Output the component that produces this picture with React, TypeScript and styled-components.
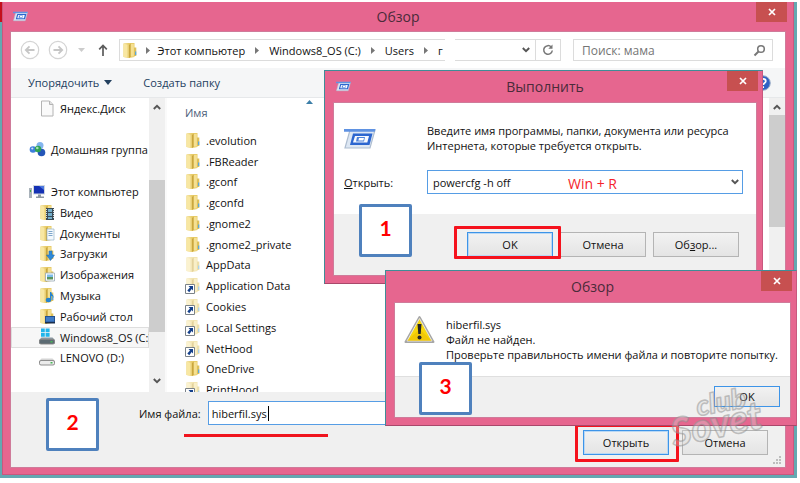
import React from "react";
import styled, { createGlobalStyle, css } from "styled-components";

const PINK = "#e6668f";
const FONT = '"Open Sans", "Noto Sans", sans-serif';

const GlobalStyle = createGlobalStyle`
  *, *::before, *::after { box-sizing: border-box; }
  body { margin: 0; background: #fff; font: 11px/15px ${FONT}; color: #111; }
  button, input, select { font: inherit; color: inherit; margin: 0; }
  ul { list-style: none; margin: 0; padding: 0; }
  p { margin: 0; }
  svg { flex: none; }
`;

/* ---------- window frame ---------- */

const Page = styled.main`
  position: relative;
  padding: 2px 3px 5px 0;
  overflow: hidden;
`;

const Desktop = styled.div`
  padding: 0 3px 3px 2px;
  background:
    linear-gradient(#c4101c, #c4101c) 0 0 / 2px 20px no-repeat,
    #64a8b1;
`;

const frame = css`
  display: flex;
  flex-direction: column;
  background: ${PINK};
  border: 1px solid #c9587e;
`;

const MainWindow = styled.section`
  ${frame}
  border-top: 0;
  padding: 0 7px 6px 7px;
`;

const Dialog = styled.section<{ $x: number; $y: number; $w: number }>`
  ${frame}
  position: absolute;
  left: ${(p) => p.$x}px;
  top: ${(p) => p.$y}px;
  width: ${(p) => p.$w}px;
  padding: 0 5px 7px 8px;
  border-color: #3f8d97;
  border-right-color: #c9587e;
  border-bottom-color: #a9486b;
`;

const TitleBar = styled.header<{ $h: number }>`
  position: relative;
  height: ${(p) => p.$h}px;
  display: flex;
  align-items: center;
  justify-content: center;
`;

const TitleIcon = styled.span`
  position: absolute;
  left: 3px;
  top: 0;
  bottom: 0;
  display: flex;
  align-items: center;
`;

const Title = styled.h1`
  margin: 0;
  font-size: 14px;
  line-height: 20px;
  font-weight: 400;
  color: #4b2b3a;
`;

const CloseButton = styled.button`
  position: absolute;
  right: -1px;
  top: 0;
  width: 31px;
  height: 20px;
  padding: 0;
  border: 0;
  background: #c75050;
  display: flex;
  align-items: center;
  justify-content: center;
`;

const Client = styled.div`
  background: #fff;
  border: 1px solid #cf7b9a;
  display: flex;
  flex-direction: column;
`;

/* ---------- explorer ---------- */

const NavBar = styled.nav`
  height: 36px;
  padding: 0 12px 0 9px;
  display: flex;
  align-items: center;
`;

const IconButton = styled.button<{ $w: number }>`
  width: ${(p) => p.$w}px;
  height: 20px;
  padding: 0;
  border: 0;
  background: none;
  display: flex;
  align-items: center;
  justify-content: center;
`;

const Crumbs = styled.div`
  flex: 0 1 328px;
  height: 22px;
  padding-left: 2px;
  border: 1px solid #dcdcdc;
  border-right: 0;
  display: flex;
  align-items: center;
  overflow: hidden;
  white-space: nowrap;
`;

const Crumb = styled.button`
  padding: 0;
  border: 0;
  background: none;
  white-space: nowrap;
`;

const CrumbArrow = styled.span<{ $first?: boolean }>`
  flex: none;
  width: ${(p) => (p.$first ? 20 : 24)}px;
  display: flex;
  justify-content: center;
`;

const ClippedName = styled.span`
  width: 6px;
`;

const AddressEnd = styled.div`
  flex: 1 1 107px;
  height: 22px;
  margin-left: 10px;
  border: 1px solid #dcdcdc;
  border-left: 0;
  display: flex;
  justify-content: flex-end;
`;

const Refresh = styled(IconButton)`
  border-left: 1px solid #dcdcdc;
`;

const Search = styled.label`
  flex: 0 0 200px;
  height: 22px;
  margin-left: 12px;
  padding: 0 6px 0 8px;
  border: 1px solid #dcdcdc;
  display: flex;
  align-items: center;
  font-size: 12px;
`;

const SearchInput = styled.input`
  flex: 1;
  min-width: 0;
  padding: 0;
  border: 0;
  outline: 0;
  background: none;
  &::placeholder { color: #757575; opacity: 1; }
`;

const Toolbar = styled.div`
  height: 30px;
  padding-left: 17px;
  display: flex;
  align-items: center;
  gap: 31px;
  background: #f5f6f7;
  border-bottom: 1px solid #e6e8ea;
`;

const ToolButton = styled.button`
  padding: 0;
  border: 0;
  background: none;
  color: #23405f;
  display: flex;
  align-items: center;
  gap: 5px;
`;

const HelpButton = styled.button`
  margin-left: auto;
  margin-right: 14px;
  padding: 0;
  border: 0;
  background: none;
  display: flex;
`;

const Body = styled.div`
  height: 294px;
  display: flex;
  overflow: hidden;
`;

const Tree = styled.ul`
  flex: 0 0 138px;
  height: 312px;
  display: grid;
  grid-template-rows: repeat(15, 1fr);
`;

const TreeItem = styled.li<{ $row: number; $depth: number; $selected?: boolean }>`
  grid-row: ${(p) => p.$row};
  min-width: 0;
  overflow: hidden;
  padding-left: ${(p) => (p.$depth ? 28 : 18)}px;
  ${(p) => p.$selected && css`
    background: #f7f7f7;
    box-shadow: inset 0 0 0 1px #dedede;
  `}
`;

const ItemButton = styled.button`
  height: 100%;
  padding: 0;
  border: 0;
  background: none;
  display: flex;
  align-items: center;
  gap: 5px;
  white-space: nowrap;
`;

const ScrollBar = styled.div<{ $start: number; $thumb: number }>`
  position: relative;
  flex: 0 0 16px;
  padding: 0 0 2px;
  background: #f0f0f0;
  display: flex;
  flex-direction: column;
  align-items: center;
  justify-content: space-between;
  &::before {
    content: "";
    position: absolute;
    left: 0;
    right: 0;
    top: ${(p) => p.$start}px;
    height: ${(p) => p.$thumb}px;
    background: #cdcdcd;
  }
`;

const ScrollButton = styled.button`
  width: 16px;
  height: 18px;
  padding: 0;
  border: 0;
  background: none;
  display: flex;
  align-items: center;
  justify-content: center;
`;

const Files = styled.div`
  flex: 1;
  padding-left: 18px;
  border-left: 2px solid #fafafa;
`;

const ColumnHead = styled.div`
  height: 32px;
  width: 136px;
  padding: 7px 8px 0 0;
  display: flex;
  justify-content: space-between;
  color: #4c607a;
  svg { margin-top: -5px; }
`;

const FileList = styled.ul`
  height: 270px;
  display: grid;
  grid-template-rows: repeat(13, 1fr);
`;

const Footer = styled.div`
  position: relative;
  height: 75px;
  padding: 9px 17px 0 0;
  background: #f0f0f0;
`;

const NameField = styled.div`
  display: flex;
  align-items: center;
  padding-left: 128px;
  gap: 7px;
`;

const NameBox = styled.div`
  position: relative;
  flex: 0 1 364px;
`;

const NameInput = styled.input`
  display: block;
  width: 100%;
  height: 24px;
  padding: 0 3px;
  border: 1px solid #569de5;
  background: #fff;
  outline: 0;
`;

const Caret = styled.i`
  position: absolute;
  left: 60px;
  top: 5px;
  width: 1px;
  height: 15px;
  background: #000;
`;

const Buttons = styled.div<{ $gap: number }>`
  display: flex;
  justify-content: flex-end;
  gap: ${(p) => p.$gap}px;
`;

const FooterButtons = styled(Buttons)`
  padding-top: 5px;
`;

const PushButton = styled.button<{ $primary?: boolean; $small?: boolean }>`
  width: ${(p) => (p.$small ? 66 : 86)}px;
  height: ${(p) => (p.$small ? 21 : 25)}px;
  padding: 0;
  border: 1px solid ${(p) => (p.$primary ? "#3d94e8" : "#b4b4b4")};
  background: linear-gradient(#f2f2f2, #e4e4e4);
  ${(p) => p.$primary && !p.$small && css`box-shadow: inset 0 0 0 1px #b9d8f5;`}
`;

const Grip = styled.svg`
  position: absolute;
  right: 3px;
  bottom: 2px;
`;

/* ---------- dialogs ---------- */

const RunBody = styled.div`
  height: 111px;
  padding: 20px 13px 0 10px;
  display: grid;
  grid-template-columns: 83px minmax(0, 1fr);
  grid-template-rows: 47px 24px;
  align-items: center;
`;

const RunIcon = styled.span`
  align-self: start;
  padding-top: 5px;
`;

const Message = styled.p`
  align-self: start;
  white-space: nowrap;
`;

const ComboBox = styled.div`
  position: relative;
  svg {
    position: absolute;
    right: 4px;
    top: 9px;
    pointer-events: none;
  }
`;

const Combo = styled.select`
  width: 100%;
  height: 24px;
  padding: 0 5px;
  border: 1px solid #569de5;
  border-radius: 0;
  background: #fff;
  appearance: none;
  display: block;
`;

const DialogFooter = styled.div<{ $h: number; $pad: string }>`
  height: ${(p) => p.$h}px;
  padding: ${(p) => p.$pad};
  background: #f0f0f0;
`;

const AlertBody = styled.div`
  height: 74px;
  padding: 12px 0 0 9px;
  display: flex;
  gap: 11px;
  border-bottom: 1px solid #dfdfdf;
  p { padding-top: 2px; }
`;

/* ---------- annotations ---------- */

const Badge = styled.div<{ $x: number; $y: number }>`
  position: absolute;
  left: ${(p) => p.$x}px;
  top: ${(p) => p.$y}px;
  width: 53px;
  height: 53px;
  border: 3px solid #4f81bd;
  border-radius: 2px;
  background: #fff;
  color: #f00;
  font: bold 21px/41px Lato, ${FONT};
  text-align: center;
`;

const Highlight = styled.div<{ $x: number; $y: number; $w: number; $h: number }>`
  position: absolute;
  left: ${(p) => p.$x}px;
  top: ${(p) => p.$y}px;
  width: ${(p) => p.$w}px;
  height: ${(p) => p.$h}px;
  border: 3px solid #f5121d;
  border-radius: 1px;
  pointer-events: none;
`;

const Underline = styled.div`
  position: absolute;
  left: 184px;
  top: 434px;
  width: 144px;
  height: 3px;
  background: #f0141e;
`;

const KeyHint = styled.span`
  position: absolute;
  left: 568px;
  top: 175px;
  font-size: 14px;
  line-height: 17px;
  color: #f5222c;
`;

const Watermark = styled.svg`
  position: absolute;
  left: 664px;
  top: 376px;
  pointer-events: none;
`;

/* ---------- drawings ---------- */

const RunGlyph = ({ w, h }: { w: number; h: number }) => (
  <svg width={w} height={h} viewBox="0 0 32 22" aria-hidden>
    <path d="M6 2h25l-5 18H1z" fill="#dde7f3" stroke="#aebdd0" strokeWidth="1.200" />
    <path d="M0 1h31.500l-.8 2.800H0z" fill="#5f92e2" />
    <path d="M9 5.500h19.500l-3 11.500H6z" fill="#2c66cf" />
    <path d="M11 8h14l-1.700 6.500H9z" fill="#f6f9ff" />
    <path d="M13 9h8l-1 4.500h-8z" fill="#4c82da" /><path d="M15 10h5l-.6 2.500h-5z" fill="#fff" />
  </svg>
);

const CloseGlyph = () => (
  <svg width="8" height="8" viewBox="0 0 8 8" aria-hidden>
    <path d="M1 1l6 6M7 1l-6 6" stroke="#fff" strokeWidth="1.700" />
  </svg>
);

const Chevron = ({ up }: { up?: boolean }) => (
  <svg width="8" height="6" viewBox="0 0 8 6" aria-hidden>
    <path d={up ? "M.8 5L4 1.800 7.200 5" : "M.8 1L4 4.200 7.200 1"} fill="none" stroke="#555" strokeWidth="1.900" />
  </svg>
);

const Arrow = ({ flip }: { flip?: boolean }) => (
  <svg width="20" height="20" viewBox="0 0 20 20" aria-hidden>
    <circle cx="10" cy="10" r="8.700" fill="none" stroke="#d4d4d4" strokeWidth="1.200" />
    <path
      d={flip ? "M5.500 10h8.500M10.500 6.300l3.700 3.700-3.700 3.700" : "M14.500 10H6M9.500 6.300L5.800 10l3.700 3.700"}
      fill="none" stroke="#c6c6c6" strokeWidth="1.800"
    />
  </svg>
);

const RightTriangle = () => (
  <svg width="4" height="7" viewBox="0 0 4 7" aria-hidden><path d="M0 0l4 3.500L0 7z" fill="#777" /></svg>
);

type Extra = "film" | "doc" | "down" | "image" | "note" | "desk" | "link";

const Folder = ({ pale, extra }: { pale?: boolean; extra?: Extra }) => (
  <svg width="16" height="17" viewBox="0 0 16 17" aria-hidden>
    <g opacity={pale ? 0.5 : 1}>
      <path d="M1.500 1.500L7 1h5.500v14L7 16l-5.500-1z" fill="#e8cc68" />
      <path d="M1.500 1.500L7 3v13l-5.500-1z" fill="#f8e7a2" />
      <path d="M5.500 2.600L7 3v13l-1.500-.3z" fill="#e9cf74" />
      <path d="M7 3l1.800-1.500v13.300L7 16z" fill="#c9a63e" />
      <path d="M8.800 2h3v12.500h-3z" fill="#f5e092" />
      <path d="M12 5.500h2.300V14H12z" fill="#ddc05a" />
      <path d="M13 9.500h1.300V13H13z" fill="#5aa7dc" />
    </g>
    {extra === "film" && (
      <g><path d="M7 4h8v12H7z" fill="#3a4a55" /><path d="M9 5h4v3H9zM9 9h4v3H9zM9 13h4v2H9z" fill="#74aecb" /><path d="M7.500 5v10M14.500 5v10" stroke="#d5dde2" strokeDasharray="1 1" /></g>
    )}
    {extra === "doc" && (
      <g><path d="M8 4h7v11H8z" fill="#f4f9fd" stroke="#9ab4c9" strokeWidth=".7" /><path d="M9.500 6.500h4M9.500 8.500h4M9.500 10.500h4" stroke="#7ea6cb" /></g>
    )}
    {extra === "down" && <path d="M10 6h3v4h2.500l-4 5.500-4-5.500H10z" fill="#2f8ad8" stroke="#1d68b0" strokeWidth=".5" />}
    {extra === "image" && (
      <g><path d="M6.500 7h9v8h-9z" fill="#fff" stroke="#98a8b4" strokeWidth=".8" /><path d="M8 8.500h6v2.500H8z" fill="#7dbce8" /><path d="M8 11h6v2.500H8z" fill="#5a9560" /></g>
    )}
    {extra === "note" && (
      <g fill="#2583cf"><ellipse cx="9.500" cy="13" rx="2.700" ry="2.200" /><path d="M11 5h1.300c0 2.500 3 2.800 2 6-.3-1.800-1.500-2-2-2v4H11z" /></g>
    )}
    {extra === "desk" && (
      <g><path d="M6 8h10v7H6z" fill="#24528f" /><path d="M7 9h8v4.500H7z" fill="#3f7bc6" /><path d="M6 14h10v1.500H6z" fill="#1b2f4d" /></g>
    )}
    {extra === "link" && (
      <g>
        <path d="M.5 7.500h9v9h-9z" fill="#fff" stroke="#7b8288" />
        <path d="M3.500 9h4.500v4.500L6.600 12 4.300 15.200 2.300 13.400 5 10.600z" fill="#15418c" />
      </g>
    )}
  </svg>
);

const PageGlyph = () => (
  <svg width="16" height="17" viewBox="0 0 16 17" aria-hidden>
    <path d="M2.500 1h8l3.500 3.500V16H2.500z" fill="#fafafa" stroke="#b4b4b4" /><path d="M10.500 1v3.500H14" fill="#e1e1e1" stroke="#b4b4b4" />
  </svg>
);

const HomeGroup = () => (
  <svg width="17" height="17" viewBox="0 0 17 17" aria-hidden>
    <circle cx="4" cy="8.500" r="3.300" fill="#3d7edb" /><circle cx="11" cy="4.500" r="3.500" fill="#83b5ee" />
    <circle cx="12.500" cy="11.500" r="3.800" fill="#2456b8" /><circle cx="9" cy="8" r="3.200" fill="#2fa353" />
    <circle cx="8.300" cy="7" r="1.300" fill="#a8e0b0" /><circle cx="3.300" cy="7.500" r="1.100" fill="#cfe2fa" />
  </svg>
);

const Computer = () => (
  <svg width="17" height="16" viewBox="0 0 17 16" aria-hidden>
    <path d="M0 4h3v10H0z" fill="#a9b2ba" /><path d="M1 6h1v2H1z" fill="#3fae49" />
    <path d="M4 1h12v9.500H4z" fill="#cfd6de" /><path d="M5 2h10v7.500H5z" fill="#1431b4" /><path d="M10 2h5v4z" fill="#4c78e0" />
    <path d="M9 10.500h3v2h3V14H7v-1.500h2z" fill="#8d98a3" />
  </svg>
);

const Drive = ({ system }: { system?: boolean }) => (
  <svg width="16" height="18" viewBox="0 0 16 18" aria-hidden>
    {system && <path d="M2 .5h3.800v3.800H2zM6.600.5h4v3.800h-4zM2 5h3.800v3.800H2zM6.600 5h4v3.800h-4z" fill="#22b5ea" />}
    <path d="M2.500 9.500h11L16 12v3.500H0V12z" fill={system ? "#8b979f" : "#d4d4d4"} />
    <rect x=".5" y="11.500" width="15" height="4.500" rx="1.500" fill={system ? "#5c6b73" : "#ececec"} stroke="#858585" strokeWidth=".9" />
    <path d="M11.500 13h2v1.500h-2z" fill="#46b955" />
  </svg>
);

const Warning = () => (
  <svg width="31" height="30" viewBox="0 0 31 30" aria-hidden>
    <path d="M15.500 2L29.500 27h-28z" fill="#b8b8b8" stroke="#a6a6a6" strokeWidth="2" strokeLinejoin="round" />
    <path d="M15.500 3.500L28 26H3z" fill="#f8d80c" stroke="#e4e4e4" strokeLinejoin="round" />
    <path d="M15.500 14L28 26H3z" fill="#e9b800" opacity=".5" />
    <path d="M13.500 9h4l-.8 10h-2.400z" fill="#262626" /><circle cx="15.500" cy="22.500" r="2" fill="#262626" />
  </svg>
);

/* ---------- data ---------- */

const places: { row: number; label: string; icon: React.ReactNode; depth: number; selected?: boolean }[] = [
  { row: 1, label: "Яндекс.Диск", icon: <PageGlyph />, depth: 1 },
  { row: 3, label: "Домашняя группа", icon: <HomeGroup />, depth: 0 },
  { row: 5, label: "Этот компьютер", icon: <Computer />, depth: 0 },
  { row: 6, label: "Видео", icon: <Folder extra="film" />, depth: 1 },
  { row: 7, label: "Документы", icon: <Folder extra="doc" />, depth: 1 },
  { row: 8, label: "Загрузки", icon: <Folder extra="down" />, depth: 1 },
  { row: 9, label: "Изображения", icon: <Folder extra="image" />, depth: 1 },
  { row: 10, label: "Музыка", icon: <Folder extra="note" />, depth: 1 },
  { row: 11, label: "Рабочий стол", icon: <Folder extra="desk" />, depth: 1 },
  { row: 12, label: "Windows8_OS (C:)", icon: <Drive system />, depth: 1, selected: true },
  { row: 13, label: "LENOVO (D:)", icon: <Drive />, depth: 1 },
];

const files: { name: string; kind?: "pale" | "link" }[] = [
  { name: ".evolution" },
  { name: ".FBReader" },
  { name: ".gconf" },
  { name: ".gconfd" },
  { name: ".gnome2" },
  { name: ".gnome2_private" },
  { name: "AppData", kind: "pale" },
  { name: "Application Data", kind: "link" },
  { name: "Cookies", kind: "link" },
  { name: "Local Settings", kind: "link" },
  { name: "NetHood", kind: "link" },
  { name: "OneDrive" },
  { name: "PrintHood", kind: "link" },
];

/* ---------- views ---------- */

const Explorer = () => (
  <MainWindow aria-label="Обзор">
    <TitleBar $h={29}>
      <TitleIcon><RunGlyph w={15} h={11} /></TitleIcon>
      <Title>Обзор</Title>
      <CloseButton aria-label="Закрыть"><CloseGlyph /></CloseButton>
    </TitleBar>
    <Client>
      <NavBar>
        <IconButton $w={20} aria-label="Назад"><Arrow /></IconButton>
        <IconButton $w={36} aria-label="Вперёд"><Arrow flip /></IconButton>
        <IconButton $w={12} aria-label="Последние"><svg width="7" height="4" viewBox="0 0 7 4"><path d="M0 0h7L3.500 4z" fill="#ccc" /></svg></IconButton>
        <IconButton $w={31} aria-label="Вверх">
          <svg width="10" height="12" viewBox="0 0 10 12"><path d="M5 12V1.500M1.200 5.300L5 1.500l3.800 3.800" fill="none" stroke="#5c5c5c" strokeWidth="1.700" /></svg>
        </IconButton>
        <Crumbs>
          <Folder />
          <CrumbArrow $first><RightTriangle /></CrumbArrow>
          <Crumb>Этот компьютер</Crumb>
          <CrumbArrow><RightTriangle /></CrumbArrow>
          <Crumb>Windows8_OS (C:)</Crumb>
          <CrumbArrow><RightTriangle /></CrumbArrow>
          <Crumb>Users</Crumb>
          <CrumbArrow><RightTriangle /></CrumbArrow>
          <ClippedName>г</ClippedName>
        </Crumbs>
        <AddressEnd>
          <IconButton $w={18} aria-label="История"><Chevron /></IconButton>
          <Refresh $w={25} aria-label="Обновить">
            <svg width="12" height="12" viewBox="0 0 12 12"><path d="M9.200 3A4.300 4.300 0 1 0 10.300 6.500" fill="none" stroke="#777" strokeWidth="1.500" /><path d="M10.500.5v4.300H6.300z" fill="#777" /></svg>
          </Refresh>
        </AddressEnd>
        <Search>
          <SearchInput type="search" placeholder="Поиск: мама" aria-label="Поиск" />
          <svg width="13" height="13" viewBox="0 0 13 13"><circle cx="8" cy="5" r="3.300" fill="none" stroke="#777" strokeWidth="1.500" /><path d="M5.500 7.500L1.500 11.500" stroke="#777" strokeWidth="2" /></svg>
        </Search>
      </NavBar>
      <Toolbar>
        <ToolButton>Упорядочить<svg width="8" height="5" viewBox="0 0 8 5"><path d="M0 0h8L4 5z" fill="#23405f" /></svg></ToolButton>
        <ToolButton>Создать папку</ToolButton>
        <HelpButton aria-label="Справка">
          <svg width="16" height="16" viewBox="0 0 16 16">
            <circle cx="8" cy="8" r="7.300" fill="#2f62c4" stroke="#9fb0c8" />
            <path d="M5.500 6.300c0-3.300 5.300-3.200 5.300 0 0 1.700-2.500 1.800-2.500 3.600M8.200 11.300v1.600" fill="none" stroke="#fff" strokeWidth="1.700" />
          </svg>
        </HelpButton>
      </Toolbar>
      <Body>
        <Tree>
          {places.map((p) => (
            <TreeItem key={p.row} $row={p.row} $depth={p.depth} $selected={p.selected}>
              <ItemButton>{p.icon}{p.label}</ItemButton>
            </TreeItem>
          ))}
          <TreeItem $row={15} $depth={0}>
            <ItemButton aria-label="Сеть"><svg width="16" height="17" viewBox="0 0 16 17"><circle cx="8" cy="8" r="6.500" fill="#3f7fd0" /></svg></ItemButton>
          </TreeItem>
        </Tree>
        <ScrollBar $start={82} $thumb={152}>
          <ScrollButton aria-label="Вверх"><Chevron up /></ScrollButton>
          <ScrollButton aria-label="Вниз"><Chevron /></ScrollButton>
        </ScrollBar>
        <Files>
          <ColumnHead>Имя<svg width="7" height="4" viewBox="0 0 7 4"><path d="M0 4h7L3.500 0z" fill="#3d7fa8" /></svg></ColumnHead>
          <FileList>
            {files.map((f) => (
              <li key={f.name}>
                <ItemButton><Folder pale={!!f.kind} extra={f.kind === "link" ? "link" : undefined} />{f.name}</ItemButton>
              </li>
            ))}
          </FileList>
        </Files>
        <ScrollBar $start={17} $thumb={112}>
          <ScrollButton aria-label="Вверх"><Chevron up /></ScrollButton>
        </ScrollBar>
      </Body>
      <Footer>
        <NameField>
          <label htmlFor="file-name">Имя файла:</label>
          <NameBox>
            <NameInput id="file-name" defaultValue="hiberfil.sys" />
            <Caret />
          </NameBox>
        </NameField>
        <FooterButtons $gap={13}>
          <PushButton $primary>Открыть</PushButton>
          <PushButton>Отмена</PushButton>
        </FooterButtons>
        <Grip width="9" height="9" viewBox="0 0 9 9" aria-hidden>
          <path d="M6 0h2v2H6zM3 3h2v2H3zM6 3h2v2H6zM0 6h2v2H0zM3 6h2v2H3zM6 6h2v2H6z" fill="#bdbdbd" />
        </Grip>
      </Footer>
    </Client>
  </MainWindow>
);

const RunDialog = () => (
  <Dialog $x={324} $y={70} $w={439} role="dialog" aria-label="Выполнить">
    <TitleBar $h={31}>
      <TitleIcon><RunGlyph w={15} h={11} /></TitleIcon>
      <Title>Выполнить</Title>
      <CloseButton aria-label="Закрыть"><CloseGlyph /></CloseButton>
    </TitleBar>
    <Client>
      <RunBody>
        <RunIcon><RunGlyph w={32} h={22} /></RunIcon>
        <Message>Введите имя программы, папки, документа или ресурса<br />Интернета, которые требуется открыть.</Message>
        <label htmlFor="command"><u>О</u>ткрыть:</label>
        <ComboBox>
          <Combo id="command"><option>powercfg -h off</option></Combo>
          <Chevron />
        </ComboBox>
      </RunBody>
      <DialogFooter $h={61} $pad="18px 17px 0">
        <Buttons $gap={7}>
          <PushButton $primary>OK</PushButton>
          <PushButton>Отмена</PushButton>
          <PushButton>Об<u>з</u>ор...</PushButton>
        </Buttons>
      </DialogFooter>
    </Client>
  </Dialog>
);

const AlertDialog = () => (
  <Dialog $x={385} $y={270} $w={412} role="alertdialog" aria-label="Обзор">
    <TitleBar $h={31}>
      <Title>Обзор</Title>
      <CloseButton aria-label="Закрыть"><CloseGlyph /></CloseButton>
    </TitleBar>
    <Client>
      <AlertBody>
        <Warning />
        <Message>hiberfil.sys<br />Файл не найден.<br />Проверьте правильность имени файла и повторите попытку.</Message>
      </AlertBody>
      <DialogFooter $h={40} $pad="9px 10px 0">
        <Buttons $gap={0}><PushButton $primary $small>OK</PushButton></Buttons>
      </DialogFooter>
    </Client>
  </Dialog>
);

export default function App() {
  return (
    <>
      <GlobalStyle />
      <Page>
        <Desktop><Explorer /></Desktop>
        <RunDialog />
        <KeyHint>Win + R</KeyHint>
        <Highlight $x={454} $y={226} $w={107} $h={33} />
        <Badge $x={359} $y={204}>1</Badge>
        <Underline />
        <Highlight $x={575} $y={424} $w={104} $h={38} />
        <Badge $x={46} $y={398}>2</Badge>
        <AlertDialog />
        <Badge $x={419} $y={362}>3</Badge>
        <Watermark width="110" height="80" viewBox="0 0 110 80" aria-hidden>
          <g fill="#d8d8d8" fillOpacity=".35" stroke="#8d8d8d" strokeOpacity=".5" strokeWidth="1.500" strokeLinejoin="round" fontFamily="Lato, sans-serif" fontWeight="900" fontStyle="italic">
            <text x="34" y="40" fontSize="28" transform="rotate(-10 34 40)">club</text>
            <text x="10" y="71" fontSize="39" transform="rotate(-12 10 71)">Sovet</text>
          </g>
        </Watermark>
      </Page>
    </>
  );
}
